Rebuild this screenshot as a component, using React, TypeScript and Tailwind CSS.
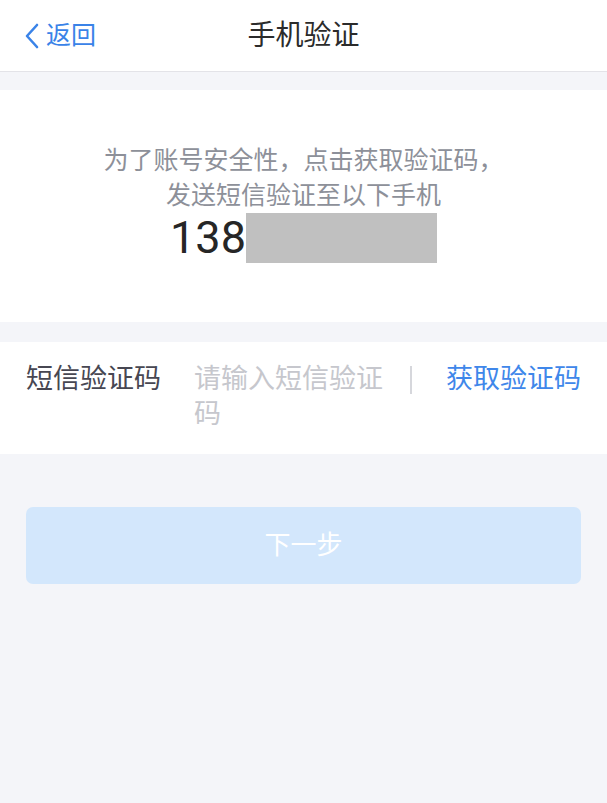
import React from "react";

const FONT = { fontFamily: '"Roboto", "Noto Sans CJK SC", sans-serif' };

function NavBar() {
  return (
    <header className="relative flex h-[72px] items-center justify-center border-b border-[#e3e3e8] bg-white">
      <button className="absolute left-[22px] top-0 flex h-full items-center text-[25px] text-[#3a83e8]">
        <svg width="20" height="28" viewBox="0 0 20 28" fill="none" className="mr-[4px]">
          <path d="M15 3 L5 14 L15 25" stroke="currentColor" strokeWidth="2.6" strokeLinecap="round" strokeLinejoin="round" />
        </svg>
        <span>返回</span>
      </button>
      <h1 className="text-[28px] text-[#2b2b2b]">手机验证</h1>
    </header>
  );
}

export default function App() {
  return (
    <div className="min-h-[803px] bg-[#f4f5f9]" style={FONT}>
      <NavBar />

      {/* phone info */}
      <section className="mt-[18px] bg-white pt-[53px] pb-[59px] text-center">
        <p className="text-[25px] leading-[35px] text-[#8d9099]">
          为了账号安全性，点击获取验证码，
          <br />
          发送短信验证至以下手机
        </p>
        <div className="flex items-center justify-center">
          <span className="text-[45px] leading-[50px] text-[#262626]">138</span>
          <span className="h-[50px] w-[191px] bg-[#c0c0c0]" />
        </div>
      </section>

      {/* sms code row */}
      <section className="mt-[20px] flex items-start bg-white pt-[20px] pb-[22px] pl-[26px] pr-[26px]">
        <span className="w-[168px] shrink-0 text-[27px] leading-[35px] text-[#474752]">短信验证码</span>
        <span className="w-[192px] shrink-0 text-[27px] leading-[35px] text-[#c6c7cd]">请输入短信验证码</span>
        <span className="ml-[24px] mt-[4px] h-[28px] w-[2px] shrink-0 bg-[#d6d7dc]" />
        <button className="ml-auto text-[27px] leading-[35px] text-[#3f87ea]">获取验证码</button>
      </section>

      <div className="px-[26px] pt-[53px]">
        <button className="flex h-[77px] w-full items-center justify-center rounded-[7px] bg-[#d3e7fc] text-[26px] text-white">
          下一步
        </button>
      </div>
    </div>
  );
}
